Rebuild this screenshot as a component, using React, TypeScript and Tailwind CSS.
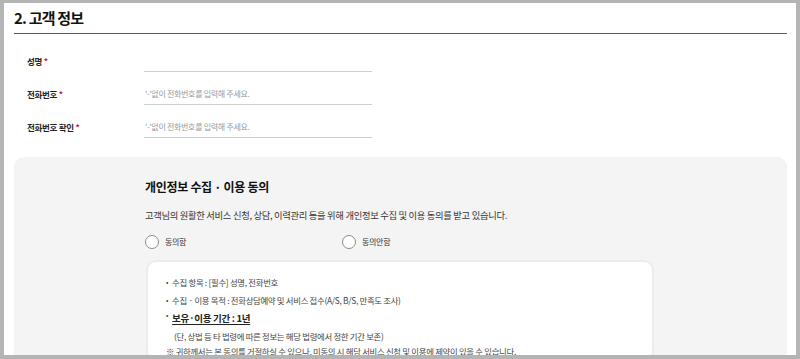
const font = { fontFamily: '"Noto Sans CJK KR", "Noto Sans", sans-serif' };

function Field({ label, placeholder }: { label: string; placeholder?: string }) {
  return (
    <div className="flex h-[22px] items-center">
      <div className="w-[130px] pl-[13px] text-[8.5px] font-bold tracking-[-0.3px] text-[#222]">
        {label} <span className="text-[#c8102e]">*</span>
      </div>
      <div className="flex h-[22px] w-[228px] items-center border-b border-[#cfcfcf] pl-[1px] text-[8px] tracking-[-0.3px] text-[#999]">
        {placeholder}
      </div>
    </div>
  );
}

function Radio({ label }: { label: string }) {
  return (
    <div className="flex items-center gap-[6px]">
      <span className="h-[14px] w-[14px] rounded-full border border-[#8a8a8a] bg-white" />
      <span className="text-[8px] tracking-[-0.3px] text-[#333]">{label}</span>
    </div>
  );
}

export default function App() {
  return (
    <div
      style={font}
      className="h-[359px] w-[800px] overflow-hidden border-t-[3px] border-r-4 border-b-4 border-l-4 border-[#b4b4b4] bg-white"
    >
      <div className="ml-[10px] mr-[9px]">
        <div className="flex h-[31px] items-center border-b border-[#5a5a5a] pt-[1px]">
          <h2 className="text-[15px] font-bold tracking-[-0.8px] text-[#111]">2. 고객 정보</h2>
        </div>

        <div className="mt-[16px] flex flex-col gap-[11px]">
          <Field label="성명" />
          <Field label="전화번호" placeholder="'-'없이 전화번호를 입력해 주세요." />
          <Field label="전화번호 확인" placeholder="'-'없이 전화번호를 입력해 주세요." />
        </div>

        <div className="mt-[19px] h-[300px] rounded-[10px] bg-[#f4f4f4] pl-[131px] pt-[20px]">
          <h3 className="text-[12px] leading-[20px] font-bold tracking-[-0.3px] text-[#111]">
            개인정보 수집 · 이용 동의
          </h3>
          <p className="mt-[10px] text-[9.3px] leading-[16px] tracking-[-0.3px] text-[#333]">
            고객님의 원활한 서비스 신청, 상담, 이력관리 등을 위해 개인정보 수집 및 이용 동의를 받고 있습니다.
          </p>
          <div className="mt-[12px] flex">
            <div className="w-[197px]">
              <Radio label="동의함" />
            </div>
            <Radio label="동의안함" />
          </div>

          <div className="mt-[11px] ml-[1px] w-[508px] rounded-[10px] border-2 border-[#ececec] bg-white pl-[18px] pt-[11px] text-[8.4px] tracking-[-0.3px] text-[#444]">
            <ul className="flex flex-col">
              <li className="flex h-[18px] items-center gap-[4px]">
                <span className="text-[7px]">•</span>
                <span>수집 항목 : [필수] 성명, 전화번호</span>
              </li>
              <li className="flex h-[18px] items-center gap-[4px]">
                <span className="text-[7px]">•</span>
                <span>수집 · 이용 목적 : 전화상담예약 및 서비스 접수(A/S, B/S, 만족도 조사)</span>
              </li>
              <li className="flex h-[19px] items-center gap-[4px]">
                <span className="self-start pt-[1px] text-[7px]">•</span>
                <span className="text-[9.5px] font-bold text-[#222] underline underline-offset-2">
                  보유·이용 기간 : 1년
                </span>
              </li>
              <li className="h-[16px] pl-[8px] leading-[16px]">
                (단, 상법 등 타 법령에 따른 정보는 해당 법령에서 정한 기간 보존)
              </li>
            </ul>
            <p className="h-[15px] leading-[14px]">
              ※ 귀하께서는 본 동의를 거절하실 수 있으나, 미동의 시 해당 서비스 신청 및 이용에 제약이 있을 수 있습니다.
            </p>
          </div>
        </div>
      </div>
    </div>
  );
}
